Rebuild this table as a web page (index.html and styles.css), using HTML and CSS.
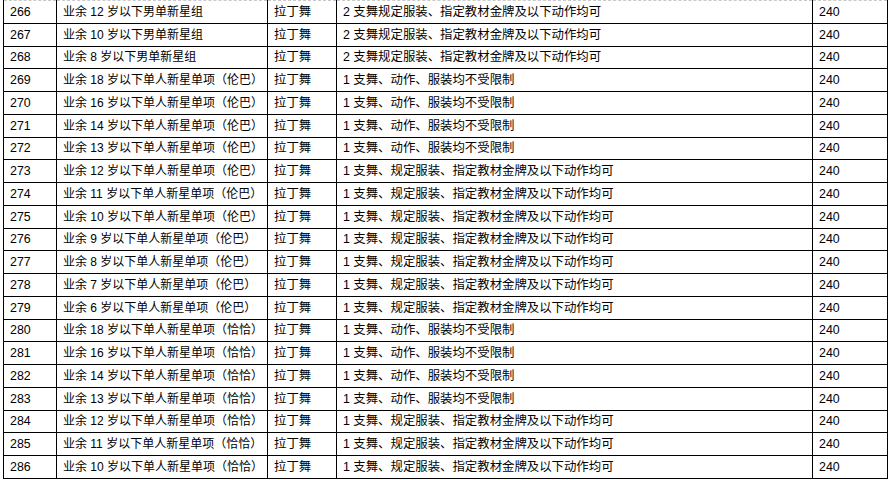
FILE: index.html
```html
<!DOCTYPE html>
<html lang="zh-CN">
<head>
<meta charset="utf-8">
<link rel="stylesheet" href="styles.css">
</head>
<body>
<table class="grid">
<colgroup><col class="c1"><col class="c2"><col class="c3"><col class="c4"><col class="c5"></colgroup>
<tbody>
<tr><td>266</td><td>业余 12 岁以下男单新星组</td><td>拉丁舞</td><td>2 支舞规定服装、指定教材金牌及以下动作均可</td><td>240</td></tr>
<tr><td>267</td><td>业余 10 岁以下男单新星组</td><td>拉丁舞</td><td>2 支舞规定服装、指定教材金牌及以下动作均可</td><td>240</td></tr>
<tr><td>268</td><td>业余 8 岁以下男单新星组</td><td>拉丁舞</td><td>2 支舞规定服装、指定教材金牌及以下动作均可</td><td>240</td></tr>
<tr><td>269</td><td>业余 18 岁以下单人新星单项（伦巴）</td><td>拉丁舞</td><td>1 支舞、动作、服装均不受限制</td><td>240</td></tr>
<tr><td>270</td><td>业余 16 岁以下单人新星单项（伦巴）</td><td>拉丁舞</td><td>1 支舞、动作、服装均不受限制</td><td>240</td></tr>
<tr><td>271</td><td>业余 14 岁以下单人新星单项（伦巴）</td><td>拉丁舞</td><td>1 支舞、动作、服装均不受限制</td><td>240</td></tr>
<tr><td>272</td><td>业余 13 岁以下单人新星单项（伦巴）</td><td>拉丁舞</td><td>1 支舞、动作、服装均不受限制</td><td>240</td></tr>
<tr><td>273</td><td>业余 12 岁以下单人新星单项（伦巴）</td><td>拉丁舞</td><td>1 支舞、规定服装、指定教材金牌及以下动作均可</td><td>240</td></tr>
<tr><td>274</td><td>业余 11 岁以下单人新星单项（伦巴）</td><td>拉丁舞</td><td>1 支舞、规定服装、指定教材金牌及以下动作均可</td><td>240</td></tr>
<tr><td>275</td><td>业余 10 岁以下单人新星单项（伦巴）</td><td>拉丁舞</td><td>1 支舞、规定服装、指定教材金牌及以下动作均可</td><td>240</td></tr>
<tr><td>276</td><td>业余 9 岁以下单人新星单项（伦巴）</td><td>拉丁舞</td><td>1 支舞、规定服装、指定教材金牌及以下动作均可</td><td>240</td></tr>
<tr><td>277</td><td>业余 8 岁以下单人新星单项（伦巴）</td><td>拉丁舞</td><td>1 支舞、规定服装、指定教材金牌及以下动作均可</td><td>240</td></tr>
<tr><td>278</td><td>业余 7 岁以下单人新星单项（伦巴）</td><td>拉丁舞</td><td>1 支舞、规定服装、指定教材金牌及以下动作均可</td><td>240</td></tr>
<tr><td>279</td><td>业余 6 岁以下单人新星单项（伦巴）</td><td>拉丁舞</td><td>1 支舞、规定服装、指定教材金牌及以下动作均可</td><td>240</td></tr>
<tr><td>280</td><td>业余 18 岁以下单人新星单项（恰恰）</td><td>拉丁舞</td><td>1 支舞、动作、服装均不受限制</td><td>240</td></tr>
<tr><td>281</td><td>业余 16 岁以下单人新星单项（恰恰）</td><td>拉丁舞</td><td>1 支舞、动作、服装均不受限制</td><td>240</td></tr>
<tr><td>282</td><td>业余 14 岁以下单人新星单项（恰恰）</td><td>拉丁舞</td><td>1 支舞、动作、服装均不受限制</td><td>240</td></tr>
<tr><td>283</td><td>业余 13 岁以下单人新星单项（恰恰）</td><td>拉丁舞</td><td>1 支舞、动作、服装均不受限制</td><td>240</td></tr>
<tr><td>284</td><td>业余 12 岁以下单人新星单项（恰恰）</td><td>拉丁舞</td><td>1 支舞、规定服装、指定教材金牌及以下动作均可</td><td>240</td></tr>
<tr><td>285</td><td>业余 11 岁以下单人新星单项（恰恰）</td><td>拉丁舞</td><td>1 支舞、规定服装、指定教材金牌及以下动作均可</td><td>240</td></tr>
<tr><td>286</td><td>业余 10 岁以下单人新星单项（恰恰）</td><td>拉丁舞</td><td>1 支舞、规定服装、指定教材金牌及以下动作均可</td><td>240</td></tr>
</tbody>
</table>
</body>
</html>
```
FILE: styles.css
```css
html, body {
  margin: 0;
  padding: 0;
  background: #ffffff;
}
body {
  overflow: hidden;
}
.grid {
  margin-left: 3px;
  border-collapse: collapse;
  table-layout: fixed;
  width: 885px;
  font-family: "Liberation Sans", "Noto Sans CJK SC", sans-serif;
  font-size: 12.4px;
  color: #000;
}
.c1 { width: 53px; }
.c2 { width: 211px; }
.c3 { width: 69px; }
.c4 { width: 476px; }
.c5 { width: 75px; }
.grid td {
  border: 1px solid #000;
  height: 22.75px;
  padding: 0 0 0 6px;
  box-sizing: border-box;
  line-height: 14px;
  vertical-align: middle;
  white-space: nowrap;
}
.grid td:nth-child(2) {
  font-size: 12px;
}
.grid tr:first-child td {
  border-top: 1px dashed #c8c8c8;
}
```
